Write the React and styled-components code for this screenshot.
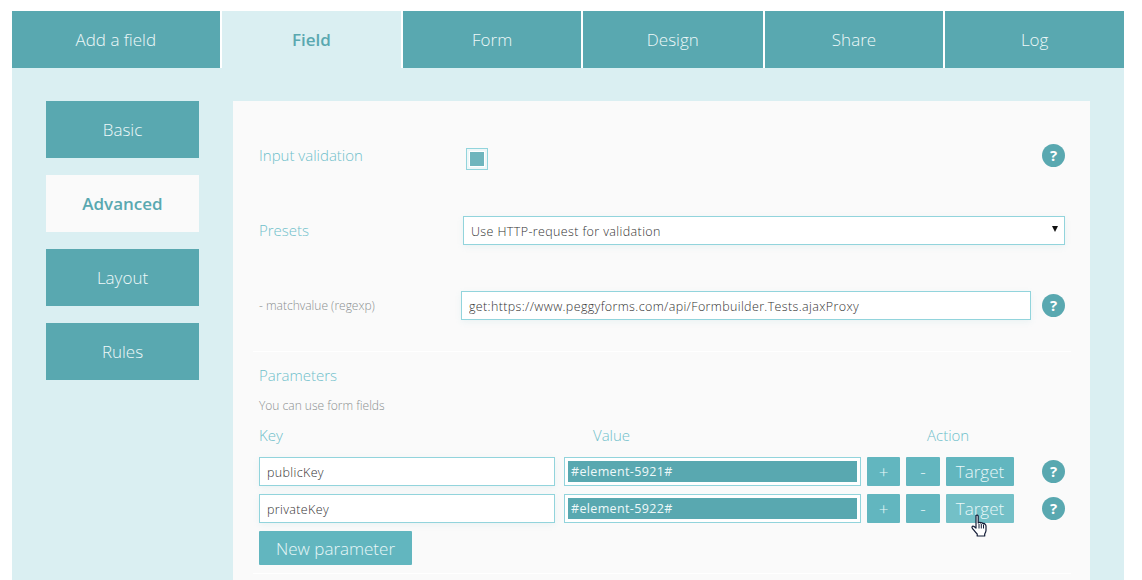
import React from "react";
import styled, { createGlobalStyle } from "styled-components";

const Global = createGlobalStyle`
  html, body { margin: 0; padding: 0; background: #fff; }
  body { font-family: "Open Sans", "Liberation Sans", sans-serif; font-weight: 300; }
  * { box-sizing: border-box; }
`;

const Page = styled.div`
  width: 1112px;
  height: 580px;
  margin: 0 0 0 12px;
  padding-top: 11px;
  overflow: hidden;
`;
const Tabs = styled.div`
  display: flex;
  height: 57px;
`;
const Tab = styled.div`
  width: ${(p) => p.$w}px;
  margin-left: ${(p) => p.$ml}px;
  display: flex;
  align-items: center;
  justify-content: center;
  font-size: 17px;
  background: ${(p) => (p.$active ? "#daeff2" : "#59a8b0")};
  color: ${(p) => (p.$active ? "#59a8b0" : "#eef8f9")};
  font-weight: ${(p) => (p.$active ? 600 : 300)};
`;
const Body = styled.div`
  height: 512px;
  background: #daeff2;
  padding: 33px 34px 0;
  display: grid;
  grid-template-columns: 153px 857px;
  column-gap: 34px;
`;
const Side = styled.div`
  display: flex;
  flex-direction: column;
  gap: 17px;
`;
const SideBtn = styled.div`
  height: 57px;
  display: flex;
  align-items: center;
  justify-content: center;
  font-size: 17px;
  background: ${(p) => (p.$active ? "#fafafa" : "#59a8b0")};
  color: ${(p) => (p.$active ? "#59a8b0" : "#eef8f9")};
  font-weight: ${(p) => (p.$active ? 600 : 300)};
`;
const Panel = styled.div`
  background: #fafafa;
  padding: 43px 25px 0 26px;
  height: 479px;
`;
const Row = styled.div`
  display: flex;
  align-items: center;
  height: ${(p) => p.$h}px;
  margin-bottom: ${(p) => p.$mb || 0}px;
`;
const Label = styled.div`
  width: ${(p) => p.$w}px;
  flex: none;
  font-size: 15px;
  line-height: 20px;
  margin-top: -2px;
  color: #6fbfca;
`;
const SmallLabel = styled(Label)`
  font-size: 12px;
  margin-top: 0;
  color: #8a8f90;
`;
const Check = styled.div`
  width: 22px;
  height: 22px;
  margin: 7px 0 0 7px;
  padding: 3px;
  border: 1px solid #92d4dc;
  background: #eef7f8;
`;
const CheckFill = styled.div`
  width: 14px;
  height: 14px;
  background: #6fb5bd;
  outline: 1px solid #fff;
`;
const Help = styled.div`
  width: 23px;
  height: 23px;
  flex: none;
  border-radius: 50%;
  background: #59a8b0;
  color: #fff;
  font-weight: 700;
  font-size: 15px;
  line-height: 23px;
  text-align: center;
  margin-left: ${(p) => p.$ml || 0}px;
`;
const Spacer = styled.div`
  flex: 1;
`;
const SelectWrap = styled.div`
  position: relative;
  margin-left: 2px;
  width: 602px;
`;
const Select = styled.select`
  appearance: none;
  display: block;
  width: 100%;
  height: 29px;
  border: 1px solid #92d4dc;
  border-radius: 0;
  background: #fff;
  padding: 2px 7px 0;
  font: 300 12.5px "Open Sans", sans-serif;
  letter-spacing: 0.38px;
  color: #333;
  box-shadow: 0 2px 6px rgba(120, 190, 200, 0.12);
`;
const Arrow = styled.span`
  position: absolute;
  right: 7px;
  top: 10px;
  width: 0;
  height: 0;
  border-left: 3px solid transparent;
  border-right: 3px solid transparent;
  border-top: 6px solid #111;
`;
const Input = styled.input`
  display: block;
  width: ${(p) => p.$w}px;
  height: 29px;
  margin-left: ${(p) => p.$ml || 0}px;
  border: 1px solid #92d4dc;
  border-radius: 0;
  background: #fff;
  padding: 2px 7px 0;
  outline: none;
  font: 300 12.5px "Open Sans", sans-serif;
  letter-spacing: 0.36px;
  color: #333;
  box-shadow: 0 2px 6px rgba(120, 190, 200, 0.12);
`;
const Divider = styled.div`
  height: 1px;
  background: #fff;
  margin: 0 -6px;
`;
const SectionTitle = styled.div`
  font-size: 15px;
  color: #6fbfca;
  line-height: 20px;
  margin-top: 13px;
`;
const Hint = styled.div`
  font-size: 12px;
  color: #8a8f90;
  line-height: 16px;
  margin-top: 13px;
`;
const Head = styled.div`
  display: flex;
  font-size: 15px;
  color: #6fbfca;
  line-height: 20px;
  margin: 11px 0 12px;
`;
const HeadCell = styled.div`
  width: ${(p) => p.$w}px;
  flex: none;
`;
const ParamRow = styled.div`
  display: flex;
  align-items: center;
  height: 29px;
  margin-bottom: 8px;
`;
const ValueBox = styled.div`
  width: 297px;
  height: 29px;
  margin-left: 9px;
  padding: 3px;
  border: 1px solid #92d4dc;
  background: #fff;
`;
const Chip = styled.div`
  height: 21px;
  line-height: 21px;
  padding-left: 3px;
  background: #59a8b0;
  color: #eef8f9;
  font-size: 12.5px;
  font-weight: 400;
  letter-spacing: 0.35px;
`;
const Btn = styled.div`
  position: relative;
  display: flex;
  align-items: center;
  justify-content: center;
  width: ${(p) => p.$w}px;
  height: ${(p) => p.$h || 29}px;
  margin-left: ${(p) => p.$ml || 0}px;
  border-radius: 1px;
  background: ${(p) => (p.$hover ? "#73c0c7" : "#62b6bf")};
  color: #e8f7f8;
  font-size: 17px;
`;
const Cursor = styled.svg`
  position: absolute;
  left: 25px;
  top: 20px;
`;
const BottomDivider = styled(Divider)`
  margin-top: 8px;
`;

function Hand() {
  return (
    <Cursor width="18" height="24" viewBox="0 0 18 24">
      <path
        d="M5 1.5c.9-.8 2-.4 2.200.8V9l.5-.3c.7-.5 1.700-.3 2 .3.7-.5 1.700-.3 2.100.5.7-.4 1.600-.1 2 .6.4.3 1.200 1 1.200 2v4.400c0 1-.8 2.500-1.300 3.500v2H6.200v-2C4.900 19 3.100 16.500 1.400 14.400.600 13.400 1 12 2.200 12.100c.9 0 1.700.9 2.800 2V2.300z"
        fill="#fff"
        stroke="#111a35"
        strokeWidth="1.200"
        strokeLinejoin="round"
      />
      <path d="M8 10v4.500M10.300 10v4.500M12.500 10.500v4" stroke="#111a35" strokeWidth="1" fill="none" />
    </Cursor>
  );
}

function Param({ name, value, hover }) {
  return (
    <ParamRow>
      <Input $w={296} defaultValue={name} />
      <ValueBox>
        <Chip>{value}</Chip>
      </ValueBox>
      <Btn $w={33} $ml={6}>+</Btn>
      <Btn $w={34} $ml={6}>-</Btn>
      <Btn $w={68} $ml={6} $hover={hover}>
        Target
        {hover && <Hand />}
      </Btn>
      <Help $ml={28}>?</Help>
    </ParamRow>
  );
}

export default function App() {
  return (
    <Page>
      <Global />
      <Tabs>
        <Tab $w={208} $ml={0}>Add a field</Tab>
        <Tab $w={180} $ml={2} $active>Field</Tab>
        <Tab $w={178} $ml={2}>Form</Tab>
        <Tab $w={180} $ml={2}>Design</Tab>
        <Tab $w={179} $ml={2}>Share</Tab>
        <Tab $w={179} $ml={2}>Log</Tab>
      </Tabs>
      <Body>
        <Side>
          <SideBtn>Basic</SideBtn>
          <SideBtn $active>Advanced</SideBtn>
          <SideBtn>Layout</SideBtn>
          <SideBtn>Rules</SideBtn>
        </Side>
        <Panel>
          <Row $h={23} $mb={49}>
            <Label $w={200}>Input validation</Label>
            <Check><CheckFill /></Check>
            <Spacer />
            <Help>?</Help>
          </Row>
          <Row $h={29} $mb={46}>
            <Label $w={202}>Presets</Label>
            <SelectWrap>
              <Select defaultValue="http">
                <option value="http">Use HTTP-request for validation</option>
              </Select>
              <Arrow />
            </SelectWrap>
          </Row>
          <Row $h={29} $mb={31}>
            <SmallLabel $w={202}>- matchvalue (regexp)</SmallLabel>
            <Input $w={570} defaultValue="get:https://www.peggyforms.com/api/Formbuilder.Tests.ajaxProxy" />
            <Help $ml={11}>?</Help>
          </Row>
          <Divider />
          <SectionTitle>Parameters</SectionTitle>
          <Hint>You can use form fields</Hint>
          <Head>
            <HeadCell $w={334}>Key</HeadCell>
            <HeadCell $w={334}>Value</HeadCell>
            <HeadCell $w={100}>Action</HeadCell>
          </Head>
          <Param name="publicKey" value="#element-5921#" />
          <Param name="privateKey" value="#element-5922#" hover />
          <Btn $w={153} $h={34}>New parameter</Btn>
          <BottomDivider />
        </Panel>
      </Body>
    </Page>
  );
}
